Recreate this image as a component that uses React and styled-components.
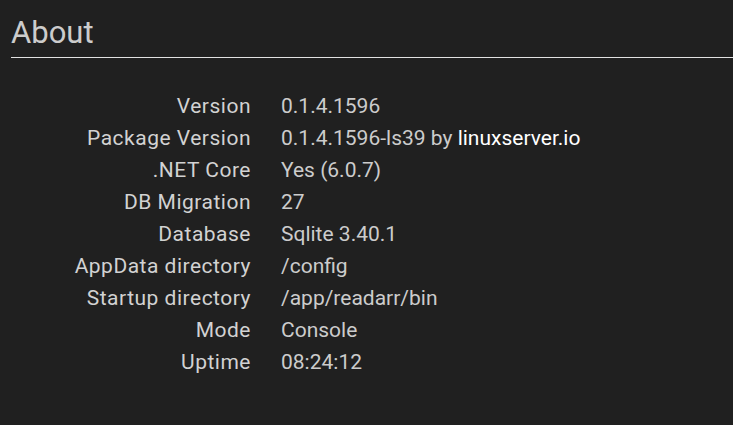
import React from 'react';
import styled, { createGlobalStyle } from 'styled-components';

const GlobalStyle = createGlobalStyle`
  html, body {
    margin: 0;
    padding: 0;
    background: #202020;
  }
  body {
    font-family: Roboto, "Noto Sans", sans-serif;
    color: #ccc;
  }
`;

const Page = styled.div`
  width: 733px;
  height: 425px;
  padding-left: 11px;
  box-sizing: border-box;
  background: #202020;
  overflow: hidden;
`;

const Fieldset = styled.fieldset`
  margin: 0;
  padding: 0;
  border: 0;
`;

const Legend = styled.legend`
  display: block;
  width: 100%;
  padding: 13px 0 5px;
  border-bottom: 1px solid #e1e1e1;
  font-size: 31px;
  font-weight: 400;
  line-height: 39px;
  color: #ccc;
`;

const List = styled.dl`
  display: grid;
  grid-template-columns: 240px 1fr;
  column-gap: 30px;
  margin: 32px 0 0;
  font-size: 21px;
  line-height: 32px;
`;

const Title = styled.dt`
  text-align: right;
  white-space: nowrap;
  letter-spacing: 0.5px;
  color: #d2d2d2;
`;

const Description = styled.dd`
  margin: 0;
  white-space: nowrap;
  color: #ccc;
`;

const Link = styled.a`
  color: #fff;
  text-decoration: none;
`;

const items = [
  ['Version', '0.1.4.1596'],
  ['Package Version', <>0.1.4.1596-ls39 by <Link href="#">linuxserver.io</Link></>],
  ['.NET Core', 'Yes (6.0.7)'],
  ['DB Migration', '27'],
  ['Database', 'Sqlite 3.40.1'],
  ['AppData directory', '/config'],
  ['Startup directory', '/app/readarr/bin'],
  ['Mode', 'Console'],
  ['Uptime', '08:24:12'],
];

export default function App() {
  return (
    <>
      <GlobalStyle />
      <Page>
        <Fieldset>
          <Legend>About</Legend>
          <List>
            {items.map(([title, value]) => (
              <React.Fragment key={title}>
                <Title>{title}</Title>
                <Description>{value}</Description>
              </React.Fragment>
            ))}
          </List>
        </Fieldset>
      </Page>
    </>
  );
}
